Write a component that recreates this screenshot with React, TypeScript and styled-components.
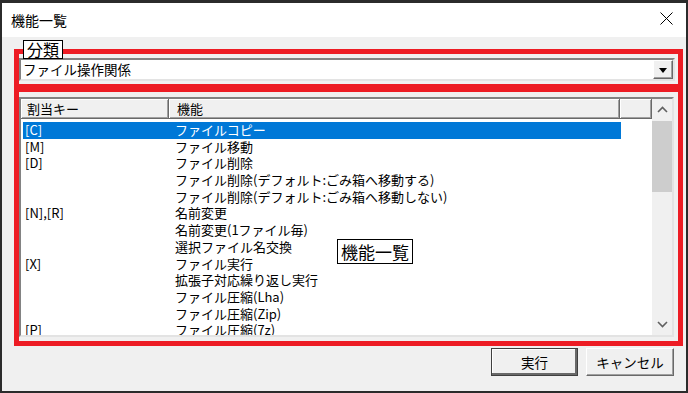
import React from 'react';
import styled, { createGlobalStyle } from 'styled-components';

const GlobalStyle = createGlobalStyle`
  html, body {
    margin: 0;
    padding: 0;
    background: #1f1f1f;
  }
  body {
    font-family: "Noto Sans CJK JP", "Noto Sans", sans-serif;
    color: #000;
  }
`;

const Window = styled.div`
  width: 688px;
  height: 393px;
  box-sizing: border-box;
  border: 2px solid #2b2b2b;
  border-top-width: 3px;
  background: #f0f0f0;
  display: flex;
  flex-direction: column;
  overflow: hidden;
`;

const TitleBar = styled.div`
  height: 34px;
  background: #fff;
  display: flex;
  align-items: center;
  justify-content: space-between;
  padding: 0 13px 0 9px;
  font-size: 14px;
`;

const TitleText = styled.span`
  line-height: 18px;
  margin-top: -1px;
`;

const CloseIcon = styled.svg`
  width: 13px;
  height: 13px;
  margin-top: -3px;
`;

const Body = styled.div`
  flex: 1;
  display: flex;
  flex-direction: column;
  padding: 12px 3px 0 12px;
`;

const Frame = styled.div`
  position: relative;
  border: 5px solid #ed1c24;
  display: flex;
  flex-direction: column;
`;

const FrameDivider = styled.div`
  height: 8px;
  background: #ed1c24;
`;

const Area = styled.div<{ $pad: string }>`
  padding: ${({ $pad }) => $pad};
`;

const Note = styled.div<{ $left: number; $top: number; $size: number; $height: number }>`
  position: absolute;
  left: ${({ $left }) => $left}px;
  top: ${({ $top }) => $top}px;
  height: ${({ $height }) => $height}px;
  box-sizing: border-box;
  background: #fff;
  border: 1px solid #000;
  font-size: ${({ $size }) => $size}px;
  line-height: ${({ $height }) => $height - 2}px;
  padding: 0 3px;
  white-space: nowrap;
`;

const Combo = styled.div`
  height: 23px;
  box-sizing: border-box;
  border: 2px solid;
  border-color: #828282 #e3e3e3 #e3e3e3 #828282;
  background: #fff;
  display: flex;
  align-items: center;
`;

const ComboText = styled.span`
  flex: 1;
  font-size: 13.5px;
  line-height: 19px;
  padding-left: 2px;
`;

const ComboButton = styled.div`
  width: 20px;
  height: 19px;
  box-sizing: border-box;
  background: #f0f0f0;
  border: 1px solid;
  border-color: #fff #696969 #696969 #fff;
  box-shadow: inset -1px -1px #a0a0a0;
  display: flex;
  align-items: center;
  justify-content: center;
`;

const Triangle = styled.div`
  width: 0;
  height: 0;
  border-left: 4.5px solid transparent;
  border-right: 4.5px solid transparent;
  border-top: 5px solid #000;
  margin-top: 1px;
`;

const ListView = styled.div`
  height: 240px;
  box-sizing: border-box;
  border: 2px solid;
  border-color: #828282 #e3e3e3 #e3e3e3 #828282;
  background: #fff;
  display: flex;
  overflow: hidden;
`;

const ListContent = styled.div`
  flex: 1;
  display: flex;
  flex-direction: column;
  overflow: hidden;
`;

const Header = styled.div`
  display: flex;
  height: 20px;
  flex-shrink: 0;
`;

const HeaderCell = styled.div<{ $width: number; $pad: number }>`
  width: ${({ $width }) => $width}px;
  box-sizing: border-box;
  padding-left: ${({ $pad }) => $pad}px;
  background: #f0f0f0;
  border-right: 1px solid #696969;
  border-bottom: 1px solid #696969;
  box-shadow: inset 1px 1px #fff, inset -1px -1px #a0a0a0;
  font-size: 13px;
  line-height: 19px;
`;

const Rows = styled.div`
  margin: 3px 0 0 2px;
  width: 598px;
`;

const Row = styled.div<{ $selected?: boolean }>`
  display: grid;
  grid-template-columns: 150px 1fr;
  height: 16.7px;
  line-height: 16.7px;
  font-size: 13px;
  white-space: nowrap;
  background: ${({ $selected }) => ($selected ? '#0078d7' : 'transparent')};
  color: ${({ $selected }) => ($selected ? '#fff' : '#000')};
`;

const Cell = styled.span`
  padding-left: 2px;
`;

const ScrollBar = styled.div`
  width: 20px;
  background: #f0f0f0;
  display: flex;
  flex-direction: column;
`;

const ScrollArrow = styled.div`
  height: 21px;
  display: flex;
  align-items: center;
  justify-content: center;
`;

const ScrollTrack = styled.div`
  flex: 1;
`;

const Thumb = styled.div`
  margin-top: 1px;
  height: 71px;
  background: #cdcdcd;
`;

const ButtonRow = styled.div`
  display: flex;
  justify-content: flex-end;
  gap: 8px;
  margin: 2px 9px 0 0;
`;

const Button = styled.button<{ $default?: boolean }>`
  width: ${({ $default }) => ($default ? 87 : 88)}px;
  height: 28px;
  box-sizing: border-box;
  background: #f0f0f0;
  font-family: inherit;
  font-size: 13.5px;
  color: #000;
  padding: 0;
  border: 1px solid;
  border-color: ${({ $default }) =>
    $default ? '#404040 #404040 #404040 #404040' : '#fff #696969 #696969 #fff'};
  box-shadow: ${({ $default }) =>
    $default
      ? 'inset -2px -2px #696969, inset 1px 1px #fff'
      : 'inset -1px -1px #a0a0a0'};
`;

const Chevron = ({ up }: { up?: boolean }) => (
  <svg width="11" height="7" viewBox="0 0 11 7">
    <polyline
      points={up ? '1,6 5.5,1.5 10,6' : '1,1 5.5,5.5 10,1'}
      fill="none"
      stroke="#606060"
      strokeWidth="1.6"
    />
  </svg>
);

const items: [string, string][] = [
  ['[C]', 'ファイルコピー'],
  ['[M]', 'ファイル移動'],
  ['[D]', 'ファイル削除'],
  ['', 'ファイル削除(デフォルト:ごみ箱へ移動する)'],
  ['', 'ファイル削除(デフォルト:ごみ箱へ移動しない)'],
  ['[N],[R]', '名前変更'],
  ['', '名前変更(1ファイル毎)'],
  ['', '選択ファイル名交換'],
  ['[X]', 'ファイル実行'],
  ['', '拡張子対応繰り返し実行'],
  ['', 'ファイル圧縮(Lha)'],
  ['', 'ファイル圧縮(Zip)'],
  ['[P]', 'ファイル圧縮(7z)'],
];

const App: React.FunctionComponent = () => (
  <>
    <GlobalStyle />
    <Window>
      <TitleBar>
        <TitleText>機能一覧</TitleText>
        <CloseIcon viewBox="0 0 13 13">
          <path d="M0.5 0.5 L12.5 12.5 M12.5 0.5 L0.5 12.5" stroke="#000" strokeWidth="1" />
        </CloseIcon>
      </TitleBar>

      <Body>
        <Frame>
          <Area $pad="4px 3px 3px 0">
            <Combo>
              <ComboText>ファイル操作関係</ComboText>
              <ComboButton>
                <Triangle />
              </ComboButton>
            </Combo>
          </Area>

          <FrameDivider />

          <Area $pad="5px 4px 4px 0">
            <ListView>
              <ListContent>
                <Header>
                  <HeaderCell $width={148} $pad={6}>割当キー</HeaderCell>
                  <HeaderCell $width={451} $pad={8}>機能</HeaderCell>
                  <HeaderCell $width={32} $pad={0} />
                </Header>
                <Rows>
                  {items.map(([key, name], i) => (
                    <Row key={name} $selected={i === 0}>
                      <Cell>{key}</Cell>
                      <Cell>{name}</Cell>
                    </Row>
                  ))}
                </Rows>
              </ListContent>
              <ScrollBar>
                <ScrollArrow>
                  <Chevron up />
                </ScrollArrow>
                <ScrollTrack>
                  <Thumb />
                </ScrollTrack>
                <ScrollArrow>
                  <Chevron />
                </ScrollArrow>
              </ScrollBar>
            </ListView>
          </Area>

          <Note $left={4} $top={-14} $size={16} $height={19}>分類</Note>
          <Note $left={318} $top={185} $size={17} $height={25}>機能一覧</Note>
        </Frame>

        <ButtonRow>
          <Button $default>実行</Button>
          <Button>キャンセル</Button>
        </ButtonRow>
      </Body>
    </Window>
  </>
);

export default App;
